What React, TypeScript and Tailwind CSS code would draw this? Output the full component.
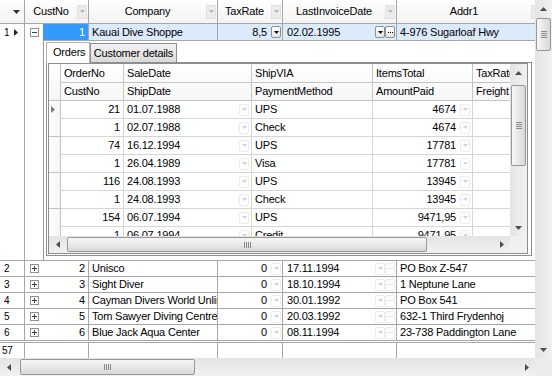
import React from 'react';

type Dir = 'u' | 'd' | 'l' | 'r';

function Tri({ d, w, h, fill }: { d: Dir; w: number; h: number; fill: string }) {
  const p =
    d === 'd'
      ? `M0 0H${w}L${w / 2} ${h}Z`
      : d === 'u'
      ? `M0 ${h}H${w}L${w / 2} 0Z`
      : d === 'l'
      ? `M${w} 0V${h}L0 ${h / 2}Z`
      : `M0 0V${h}L${w} ${h / 2}Z`;
  return (
    <svg width={w} height={h} viewBox={`0 0 ${w} ${h}`} className="block">
      <path d={p} fill={fill} />
    </svg>
  );
}

function FilterBtn() {
  return (
    <div className="w-[10px] h-[14px] shrink-0 bg-[#ececec] border border-[#e0e0e0] flex items-center justify-center">
      <Tri d="d" w={5} h={3} fill="#b4b4b4" />
    </div>
  );
}

function DropBtn({ faded }: { faded?: boolean }) {
  return (
    <div
      className={`w-[10px] h-[12px] shrink-0 rounded-[2px] border flex items-center justify-center ${
        faded ? 'border-[#ececec] bg-white' : 'border-[#8e8f8f] bg-gradient-to-b from-white to-[#e4e4e4]'
      }`}
    >
      <Tri d="d" w={5} h={3} fill={faded ? '#d2d2d2' : '#000'} />
    </div>
  );
}

function DotsBtn({ faded }: { faded?: boolean }) {
  return (
    <div
      className={`w-[10px] h-[12px] shrink-0 rounded-[2px] border flex items-center justify-center gap-[1px] ${
        faded ? 'border-[#ececec] bg-white' : 'border-[#8e8f8f] bg-gradient-to-b from-white to-[#e4e4e4]'
      }`}
    >
      <div className={`w-[1px] h-[1px] ${faded ? 'bg-[#cfcfcf]' : 'bg-black'}`} />
      <div className={`w-[1px] h-[1px] ${faded ? 'bg-[#cfcfcf]' : 'bg-black'}`} />
      <div className={`w-[1px] h-[1px] ${faded ? 'bg-[#cfcfcf]' : 'bg-black'}`} />
    </div>
  );
}

function ExpandBox({ open }: { open?: boolean }) {
  return (
    <div className="w-[9px] h-[9px] border border-[#919191] bg-white flex items-center justify-center relative">
      <div className="w-[5px] h-[1px] bg-[#404040]" />
      {!open && <div className="absolute w-[1px] h-[5px] bg-[#404040]" />}
    </div>
  );
}

function VScroll({ className, before, thumb }: { className: string; before: string; thumb: string }) {
  return (
    <div className={`flex flex-col w-[17px] shrink-0 bg-gradient-to-r from-[#e4e4e4] to-[#f1f1f1] ${className}`}>
      <div className="h-[17px] shrink-0 flex items-center justify-center">
        <Tri d="u" w={7} h={4} fill="#4d4d4d" />
      </div>
      <div className={before} />
      <div
        className={`mx-[1px] rounded-[2px] border border-[#979797] bg-gradient-to-r from-[#f7f7f7] to-[#d8d8d8] flex flex-col items-center justify-center gap-[1px] ${thumb}`}
      >
        <div className="w-[6px] h-[1px] bg-[#8a8a8a]" />
        <div className="w-[6px] h-[1px] bg-[#8a8a8a]" />
        <div className="w-[6px] h-[1px] bg-[#8a8a8a]" />
        <div className="w-[6px] h-[1px] bg-[#8a8a8a]" />
      </div>
      <div className="flex-1" />
      <div className="h-[17px] shrink-0 flex items-center justify-center">
        <Tri d="d" w={7} h={4} fill="#4d4d4d" />
      </div>
    </div>
  );
}

function HScroll({ className, before, thumb }: { className: string; before: string; thumb: string }) {
  return (
    <div className={`flex items-stretch bg-gradient-to-b from-[#e4e4e4] to-[#f1f1f1] ${className}`}>
      <div className="w-[17px] shrink-0 flex items-center justify-center">
        <Tri d="l" w={4} h={7} fill="#4d4d4d" />
      </div>
      <div className={before} />
      <div
        className={`my-[1px] rounded-[2px] border border-[#979797] bg-gradient-to-b from-[#f7f7f7] to-[#d8d8d8] flex items-center justify-center gap-[1px] ${thumb}`}
      >
        <div className="w-[1px] h-[6px] bg-[#8a8a8a]" />
        <div className="w-[1px] h-[6px] bg-[#8a8a8a]" />
        <div className="w-[1px] h-[6px] bg-[#8a8a8a]" />
        <div className="w-[1px] h-[6px] bg-[#8a8a8a]" />
      </div>
      <div className="flex-1" />
      <div className="w-[17px] shrink-0 flex items-center justify-center">
        <Tri d="r" w={4} h={7} fill="#4d4d4d" />
      </div>
    </div>
  );
}

function HeadCell({ w, label }: { w: string; label: string }) {
  return (
    <div className={`${w} shrink-0 flex items-center pr-[1px] border-r border-[#a6a6a6]`}>
      <span className="flex-1 text-center whitespace-nowrap overflow-hidden">{label}</span>
      <FilterBtn />
    </div>
  );
}

const customers = [
  { no: 2, company: 'Unisco', date: '17.11.1994', addr: 'PO Box Z-547' },
  { no: 3, company: 'Sight Diver', date: '18.10.1994', addr: '1 Neptune Lane' },
  { no: 4, company: 'Cayman Divers World Unlimited', date: '30.01.1992', addr: 'PO Box 541' },
  { no: 5, company: 'Tom Sawyer Diving Centre', date: '20.03.1992', addr: '632-1 Third Frydenhoj' },
  { no: 6, company: 'Blue Jack Aqua Center', date: '08.11.1994', addr: '23-738 Paddington Lane' },
];

const orders = [
  ['21', '01.07.1988', 'UPS', '4674', '1', '02.07.1988', 'Check', '4674'],
  ['74', '16.12.1994', 'UPS', '17781', '1', '26.04.1989', 'Visa', '17781'],
  ['116', '24.08.1993', 'UPS', '13945', '1', '24.08.1993', 'Check', '13945'],
  ['154', '06.07.1994', 'UPS', '9471,95', '1', '06.07.1994', 'Credit', '9471,95'],
];

function SubRow({ a, b, c, d }: { a: string; b: string; c: string; d: string }) {
  return (
    <div className="flex h-[18px] shrink-0 border-b border-[#d6d6d6]">
      <div className="w-[63px] shrink-0 border-r border-[#d6d6d6] text-right pr-[3px] leading-[17px]">{a}</div>
      <div className="w-[128px] shrink-0 border-r border-[#d6d6d6] flex items-center pl-[3px] pr-[2px]">
        <span className="flex-1">{b}</span>
        <DropBtn faded />
      </div>
      <div className="w-[121px] shrink-0 border-r border-[#d6d6d6] pl-[3px] leading-[17px]">{c}</div>
      <div className="w-[100px] shrink-0 border-r border-[#d6d6d6] flex items-center pr-[2px]">
        <span className="flex-1 text-right pr-[4px]">{d}</span>
        <DropBtn faded />
      </div>
      <div className="w-[37px] shrink-0" />
    </div>
  );
}

function OrdersGrid() {
  return (
    <div className="w-[480px] h-[191px] border border-[#8e8e8e] flex flex-col bg-white">
      <div className="flex h-[172px]">
        <div className="w-[461px] flex flex-col overflow-hidden">
          <div className="flex shrink-0 bg-gradient-to-b from-white to-[#f6f6f6]">
            <div className="w-[12px] h-[37px] shrink-0 border-r border-b border-[#c4c4c4]" />
            <div className="flex flex-col">
              <div className="flex h-[19px] border-b border-[#c4c4c4] leading-[18px]">
                <div className="w-[63px] border-r border-[#c4c4c4] pl-[3px]">OrderNo</div>
                <div className="w-[128px] border-r border-[#c4c4c4] pl-[3px]">SaleDate</div>
                <div className="w-[121px] border-r border-[#c4c4c4] pl-[3px]">ShipVIA</div>
                <div className="w-[100px] border-r border-[#c4c4c4] pl-[3px]">ItemsTotal</div>
                <div className="w-[37px] pl-[3px] overflow-hidden whitespace-nowrap">TaxRate</div>
              </div>
              <div className="flex h-[18px] border-b border-[#c4c4c4] leading-[17px]">
                <div className="w-[63px] border-r border-[#c4c4c4] pl-[3px]">CustNo</div>
                <div className="w-[128px] border-r border-[#c4c4c4] pl-[3px]">ShipDate</div>
                <div className="w-[121px] border-r border-[#c4c4c4] pl-[3px]">PaymentMethod</div>
                <div className="w-[100px] border-r border-[#c4c4c4] pl-[3px]">AmountPaid</div>
                <div className="w-[37px] pl-[3px] overflow-hidden whitespace-nowrap">Freight</div>
              </div>
            </div>
          </div>
          {orders.map((o, i) => (
            <div key={i} className="flex shrink-0">
              <div className="w-[12px] h-[36px] shrink-0 border-r border-b border-[#c4c4c4] bg-gradient-to-r from-white to-[#f4f4f4] pt-[5px] pl-[2px]">
                {i === 0 && <Tri d="r" w={4} h={7} fill="#7a7a7a" />}
              </div>
              <div className="flex flex-col">
                <SubRow a={o[0]} b={o[1]} c={o[2]} d={o[3]} />
                <SubRow a={o[4]} b={o[5]} c={o[6]} d={o[7]} />
              </div>
            </div>
          ))}
        </div>
        <VScroll className="h-[172px]" before="h-[4px]" thumb="h-[81px]" />
      </div>
      <div className="flex h-[17px]">
        <HScroll className="w-[461px]" before="w-[1px]" thumb="w-[360px]" />
        <div className="w-[17px] bg-[#f0f0f0]" />
      </div>
    </div>
  );
}

export default function App() {
  const ln = 'border-[#a6a6a6]';
  return (
    <div className="w-[552px] h-[376px] bg-white flex flex-col overflow-hidden text-[11px] tracking-[-0.2px] text-black font-['Liberation_Sans',Arial,sans-serif]">
      <div className="flex h-[358px]">
        <div className="w-[535px] flex flex-col overflow-hidden">
          {/* header */}
          <div className={`flex h-[24px] shrink-0 border-b ${ln} bg-gradient-to-b from-white to-[#f3f3f3]`}>
            <div className={`w-[25px] shrink-0 border-r ${ln} flex items-center justify-end pr-[4px]`}>
              <Tri d="d" w={7} h={4} fill="#333" />
            </div>
            <HeadCell w="w-[64px]" label="CustNo" />
            <HeadCell w="w-[129px]" label="Company" />
            <HeadCell w="w-[65px]" label="TaxRate" />
            <HeadCell w="w-[114px]" label="LastInvoiceDate" />
            <HeadCell w="w-[146px]" label="Addr1" />
          </div>

          {/* expanded row 1 */}
          <div className={`flex h-[237px] shrink-0 border-b ${ln}`}>
            <div className={`w-[25px] shrink-0 border-r ${ln}`}>
              <div className="h-[17px] flex items-center pl-[4px] gap-[5px]">
                <span className="text-[10px]">1</span>
                <Tri d="r" w={4} h={7} fill="#222" />
              </div>
            </div>
            <div className="w-[18px] shrink-0 flex justify-center pt-[4px]">
              <ExpandBox open />
            </div>
            <div className="w-[492px] flex flex-col">
              <div className={`flex h-[17px] shrink-0 border-b ${ln} bg-[#dcebfc] leading-[16px]`}>
                <div className={`w-[46px] shrink-0 border-r ${ln} bg-[#3399ff] text-white text-right pr-[3px]`}>1</div>
                <div className={`w-[129px] shrink-0 border-r ${ln} pl-[3px] whitespace-nowrap overflow-hidden`}>Kauai Dive Shoppe</div>
                <div className={`w-[65px] shrink-0 border-r ${ln} flex items-center pr-[1px]`}>
                  <span className="flex-1 text-right pr-[4px]">8,5</span>
                  <DropBtn />
                </div>
                <div className={`w-[114px] shrink-0 border-r ${ln} flex items-center pl-[4px] pr-[1px]`}>
                  <span className="flex-1">02.02.1995</span>
                  <DropBtn />
                  <DotsBtn />
                </div>
                <div className="w-[146px] shrink-0 pl-[3px] whitespace-nowrap">4-976 Sugarloaf Hwy</div>
              </div>
              <div className="h-[219px] border-l border-[#9a9a9a] flex flex-col pl-[2px] bg-white">
                <div className="flex items-end h-[21px] shrink-0">
                  <div className="relative z-10 -mb-px w-[44px] h-[21px] border-t border-l border-r border-[#b5b5b5] bg-white pl-[6px] leading-[19px]">
                    Orders
                  </div>
                  <div className="w-[87px] h-[19px] border border-b-0 border-[#8c8e94] bg-gradient-to-b from-[#f2f2f2] to-[#dadada] text-center leading-[18px] whitespace-nowrap">
                    Customer details
                  </div>
                </div>
                <div className="w-[486px] h-[194px] border border-[#8c8e94] pl-[1px]">
                  <OrdersGrid />
                </div>
              </div>
            </div>
          </div>

          {/* rows 2..6 */}
          {customers.map((c) => (
            <div key={c.no} className={`flex h-[16px] shrink-0 border-b ${ln} leading-[15px]`}>
              <div className={`w-[25px] shrink-0 border-r ${ln} pl-[4px] text-[10px]`}>{c.no}</div>
              <div className="w-[18px] shrink-0 flex items-center justify-center">
                <ExpandBox />
              </div>
              <div className={`w-[46px] shrink-0 border-r ${ln} text-right pr-[3px]`}>{c.no}</div>
              <div className={`w-[129px] shrink-0 border-r ${ln} pl-[3px] whitespace-nowrap overflow-hidden`}>{c.company}</div>
              <div className={`w-[65px] shrink-0 border-r ${ln} flex items-center pr-[1px]`}>
                <span className="flex-1 text-right pr-[4px]">0</span>
                <DropBtn faded />
              </div>
              <div className={`w-[114px] shrink-0 border-r ${ln} flex items-center pl-[4px] pr-[1px]`}>
                <span className="flex-1">{c.date}</span>
                <DropBtn faded />
                <DotsBtn faded />
              </div>
              <div className="w-[146px] shrink-0 pl-[3px] whitespace-nowrap">{c.addr}</div>
            </div>
          ))}

          {/* footer */}
          <div className={`flex h-[16px] shrink-0 mt-[1px] border-t ${ln} leading-[15px] text-[10px]`}>
            <div className={`w-[25px] shrink-0 border-r ${ln} pl-[2px]`}>57</div>
            <div className={`w-[64px] shrink-0 border-r ${ln}`} />
            <div className={`w-[129px] shrink-0 border-r ${ln}`} />
            <div className={`w-[65px] shrink-0 border-r ${ln}`} />
            <div className={`w-[114px] shrink-0 border-r ${ln}`} />
            <div className="w-[146px] shrink-0" />
          </div>
        </div>
        <VScroll className="h-[358px]" before="h-[1px]" thumb="h-[33px]" />
      </div>
      <div className="flex h-[18px]">
        <HScroll className="w-[535px]" before="w-[3px]" thumb="w-[175px]" />
        <div className="w-[17px] bg-[#ececec]" />
      </div>
    </div>
  );
}
